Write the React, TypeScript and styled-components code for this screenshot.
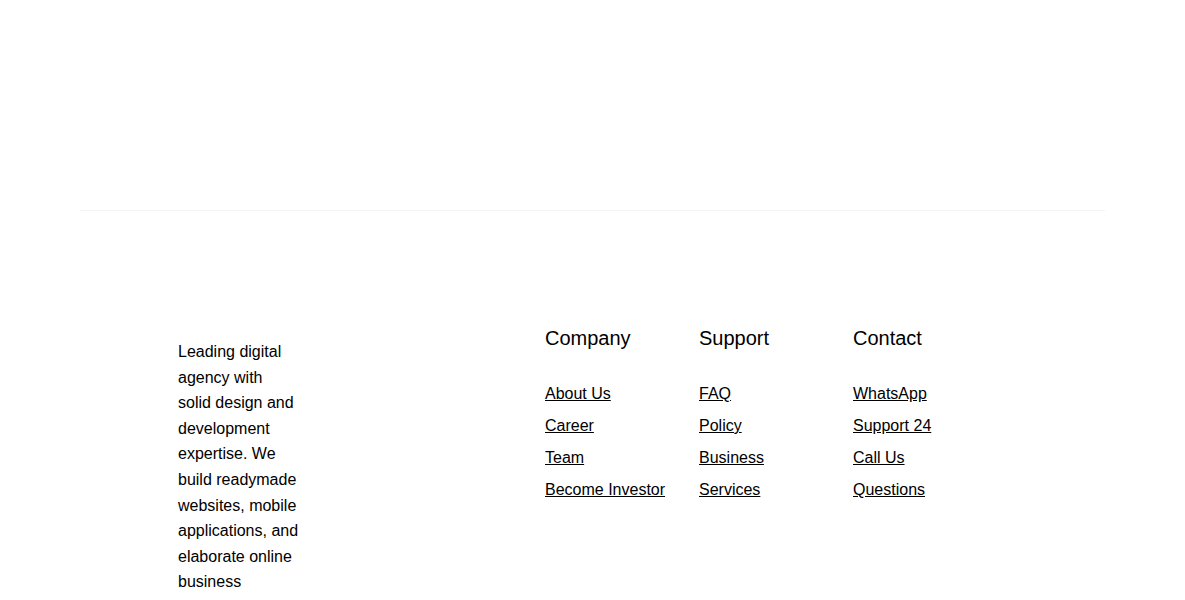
import React from "react";
import styled, { createGlobalStyle } from "styled-components";

const Global = createGlobalStyle`
  html, body { margin: 0; padding: 0; background: #ffffff; }
  body { font-family: "Liberation Sans", Arial, sans-serif; color: #000; }
`;

const Page = styled.div`
  width: 1185px;
  padding: 0 80px;
  box-sizing: border-box;
`;

const Hero = styled.div`
  height: 210px;
`;

const Divider = styled.hr`
  margin: 0;
  border: 0;
  border-top: 1px solid #f3f3f3;
`;

const Footer = styled.footer`
  display: flex;
  justify-content: space-between;
  align-items: flex-start;
  padding: 116px 98px 0;
`;

const About = styled.p`
  width: 121.5px;
  margin: 12px 0 0;
  font-size: 16px;
  line-height: 25.6px;
`;

const Columns = styled.div`
  display: flex;
`;

const Column = styled.div`
  width: 154px;
  display: flex;
  flex-direction: column;
`;

const Heading = styled.h4`
  margin: 0 0 28px;
  font-size: 20px;
  font-weight: 400;
  line-height: 23px;
`;

const Link = styled.a`
  display: block;
  font-size: 16px;
  line-height: 32px;
  color: #000;
  text-decoration: underline;
  white-space: nowrap;
`;

const columns = [
  { title: "Company", links: ["About Us", "Career", "Team", "Become Investor"] },
  { title: "Support", links: ["FAQ", "Policy", "Business", "Services"] },
  { title: "Contact", links: ["WhatsApp", "Support 24", "Call Us", "Questions"] },
];

export default function App() {
  return (
    <Page>
      <Global />
      <Hero />
      <Divider />
      <Footer>
        <About>
          Leading digital agency with solid design and development expertise. We build readymade websites, mobile applications, and elaborate online business
        </About>
        <Columns>
          {columns.map((c) => (
            <Column key={c.title}>
              <Heading>{c.title}</Heading>
              {c.links.map((l) => (
                <Link key={l} href="#">
                  {l}
                </Link>
              ))}
            </Column>
          ))}
        </Columns>
      </Footer>
    </Page>
  );
}
